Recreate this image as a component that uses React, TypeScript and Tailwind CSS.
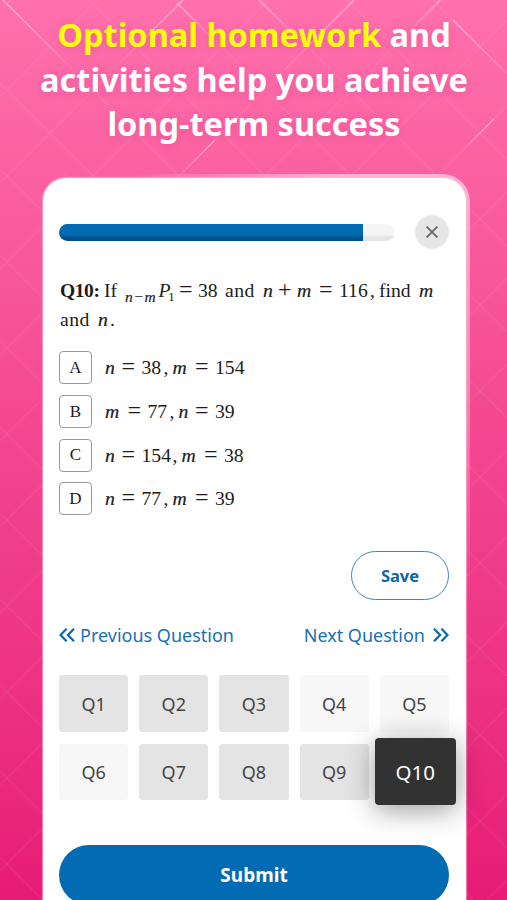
import { Fragment } from "react"

const answers = [
  { letter: "A", tokens: ["n", "=", "38", ",", "m", "=", "154"] },
  { letter: "B", tokens: ["m", "=", "77", ",", "n", "=", "39"] },
  { letter: "C", tokens: ["n", "=", "154", ",", "m", "=", "38"] },
  { letter: "D", tokens: ["n", "=", "77", ",", "m", "=", "39"] },
]

const questions = [
  { name: "Q1", done: true },
  { name: "Q2", done: true },
  { name: "Q3", done: true },
  { name: "Q4", done: false },
  { name: "Q5", done: false },
  { name: "Q6", done: false },
  { name: "Q7", done: true },
  { name: "Q8", done: true },
  { name: "Q9", done: true },
]

const italic = "italic [-webkit-text-stroke:0.2px_#222]"

// column width of every kind of math token
const tokenClass: Record<string, string> = {
  n: `w-[16.5px] ${italic}`,
  m: `w-[22.5px] ${italic}`,
  "=": "w-[20px] text-[24px]",
  ",": "w-[9px]",
}

function Equation({ tokens }: { tokens: string[] }) {
  return (
    <span className="flex items-baseline text-[19.7px] leading-[31px]">
      {tokens.map((t, i) => (
        <span key={i} className={tokenClass[t] ?? (t.length === 3 ? "w-[31px]" : "w-[22px]")}>{t}</span>
      ))}
    </span>
  )
}

// diagonal lattice, one line every 86px in both directions
function Backdrop() {
  const steps = Array.from({ length: 18 }, (_, i) => i)
  return (
    <svg className="absolute inset-0" width="507" height="900" viewBox="0 0 507 900" fill="none">
      <defs>
        <linearGradient id="down" x1="0" y1="0" x2="1" y2="1">
          <stop offset="0" stopColor="#fff" stopOpacity=".4" />
          <stop offset="1" stopColor="#fff" stopOpacity=".04" />
        </linearGradient>
        <linearGradient id="up" x1="1" y1="0" x2="0" y2="1">
          <stop offset="0" stopColor="#fff" stopOpacity=".36" />
          <stop offset="1" stopColor="#fff" stopOpacity=".06" />
        </linearGradient>
      </defs>
      <g stroke="#fff" strokeOpacity=".06" strokeWidth="1.6">
        {steps.map((i) => (
          <Fragment key={i}>
            <path d={`M0 ${-433 + i * 86}l507 507`} />
            <path d={`M0 ${11 + i * 86}l507 -507`} />
          </Fragment>
        ))}
      </g>
      <g strokeWidth="1.6">
        <path d="M3 0L68 65" stroke="url(#down)" />
        <path d="M177 3L212 38" stroke="url(#down)" />
        <path d="M259 0L294 35" stroke="url(#down)" />
        <path d="M453 20L507 74" stroke="url(#down)" />
        <path d="M183 0L125 58" stroke="url(#up)" />
        <path d="M354 0L284 70" stroke="url(#up)" />
        <path d="M440 0L412 28" stroke="url(#up)" />
        <path d="M494 119L463 150" stroke="url(#up)" />
        <path d="M215 140L182 173" stroke="url(#up)" />
      </g>
    </svg>
  )
}

function Chevrons({ flip }: { flip?: boolean }) {
  return (
    <svg className={flip ? "rotate-180" : ""} width="17" height="16" viewBox="0 0 17 16" fill="none" stroke="#0a6ab0" strokeWidth="2.3">
      <path d="M7.6 1.7L1.5 8L7.6 14.3M15 1.7L8.9 8L15 14.3" />
    </svg>
  )
}

export default function App() {
  return (
    <main className="relative w-[507px] h-[900px] overflow-hidden bg-linear-to-b from-[#ff70ad] via-[#f3458f] to-[#e71b76] font-['Noto_Sans',sans-serif]">
      <Backdrop />
      <div className="relative flex flex-col h-full">
        <h1 className="h-[174px] pt-[13px] pl-px text-center text-[32.5px] leading-[44.5px] font-bold text-white whitespace-nowrap [text-shadow:0_1px_8px_rgba(190,30,100,0.18)]">
          <span className="text-[#fffc0a]">Optional homework</span> and<br />
          activities help you achieve<br />
          long-term success
        </h1>
        {/* edge of the phone, it fades out to the left and further down */}
        <div className="relative ml-[42px] w-[428px] h-[726px] shrink-0 pt-[4px] pl-px">
          <div className="absolute inset-0 rounded-t-[27px] bg-linear-to-b from-[#ffb3d5] via-[#f983b7] via-30% to-transparent to-60% mask-l-from-30% mask-l-to-80%"></div>
          <section className="relative w-[423px] h-[722px] rounded-t-[23px] bg-white pl-[16px] pr-[17px] flex flex-col shadow-[0_0_1px_1px_rgba(255,190,220,0.6)]">
            <div className="mt-[37px] h-[34px] flex items-center justify-between">
              <div className="w-[336px] h-[17px] rounded-full overflow-hidden bg-linear-to-b from-[#f5f5f5] from-65% to-[#e5e5e5] to-75%">
                <div className="w-[304px] h-full bg-linear-to-b from-[#026bb1] from-60% to-[#03508b] to-85%"></div>
              </div>
              <div className="w-[34px] h-[34px] rounded-full bg-[#e7e7e7] flex items-center justify-center">
                <svg width="12" height="12" viewBox="0 0 12 12" stroke="#6a6a6a" strokeWidth="1.9">
                  <path d="M.5 .5L11.5 11.5M11.5 .5L.5 11.5" />
                </svg>
              </div>
            </div>

            <div className="mt-[25px] text-[19.7px] leading-[30px] text-[#1c1c1c] font-['Liberation_Serif',serif] whitespace-nowrap">
              <p className="flex items-baseline h-[30px] pl-px">
                <b className="w-[44px] text-[19.5px] tracking-[-0.4px]">Q10:</b>
                <span className="w-[21px]">If</span>
                <span className={`w-[33.5px] relative top-[5px] text-[15.5px] tracking-[0.7px] ${italic}`}>n−m</span>
                <span className="w-[9.5px] italic">P</span>
                <span className="w-[11px] relative top-[4px] text-[13.5px]">1</span>
                <span className="w-[19px] text-[24px]">=</span>
                <span className="w-[27px]">38</span>
                <span className="w-[38px] tracking-[0.5px]">and</span>
                <span className={`w-[15px] ${italic}`}>n</span>
                <span className="w-[19px] text-[24px]">+</span>
                <span className={`w-[22px] ${italic}`}>m</span>
                <span className="w-[20px] text-[24px]">=</span>
                <span className="w-[31px]">116</span>
                <span className="w-[9px]">,</span>
                <span className="w-[40px]">find</span>
                <span className={italic}>m</span>
              </p>
              <p className="flex items-baseline h-[30px] pl-px">
                <span className="w-[38px] tracking-[0.5px]">and</span>
                <span className={`w-[12px] ${italic}`}>n</span>
                <span>.</span>
              </p>
            </div>

            <ul className="mt-[17px] flex flex-col gap-[10.8px] text-[#1c1c1c] font-['Liberation_Serif',serif]">
              {answers.map((a) => (
                <li key={a.letter} className="flex h-[33px]">
                  <span className="w-[33px] h-[33px] mr-[13px] rounded-[4px] border-[1.5px] border-[#999] flex items-center justify-center text-[17px]">{a.letter}</span>
                  <Equation tokens={a.tokens} />
                </li>
              ))}
            </ul>

            <button className="mt-[36px] self-end w-[98px] h-[49px] shrink-0 rounded-full border-[1.5px] border-[#3a86c0] text-[16.5px] font-bold text-[#0a67ab]">Save</button>

            <div className="mt-[21px] h-[28px] shrink-0 flex items-center justify-between text-[18px] text-[#1a70b3] whitespace-nowrap">
              <span className="flex items-center gap-[4px]"><Chevrons />Previous Question</span>
              <span className="flex items-center gap-[7px]">Next Question<Chevrons flip /></span>
            </div>

            <div className="mt-[26px] grid grid-cols-5 gap-x-[11px] gap-y-[12px] text-[18px] text-[#444]">
              {questions.map((q) => (
                <div key={q.name} className={`h-[56.5px] pt-px rounded-[3px] flex items-center justify-center ${q.done ? "bg-[#e4e4e4]" : "bg-[#f7f7f7]"}`}>{q.name}</div>
              ))}
              <div className="w-[81px] h-[67px] pt-[2px] -ml-[5px] -mt-[6px] -mb-[5px] rounded-[4px] bg-[#323232] text-[20.5px] text-white flex items-center justify-center shadow-[0_5px_28px_rgba(0,0,0,0.4)]">Q10</div>
            </div>

            <button className="mt-[45px] h-[60px] shrink-0 rounded-full bg-[#026bb3] text-[19px] font-bold text-white">Submit</button>
          </section>
        </div>
      </div>
    </main>
  )
}
